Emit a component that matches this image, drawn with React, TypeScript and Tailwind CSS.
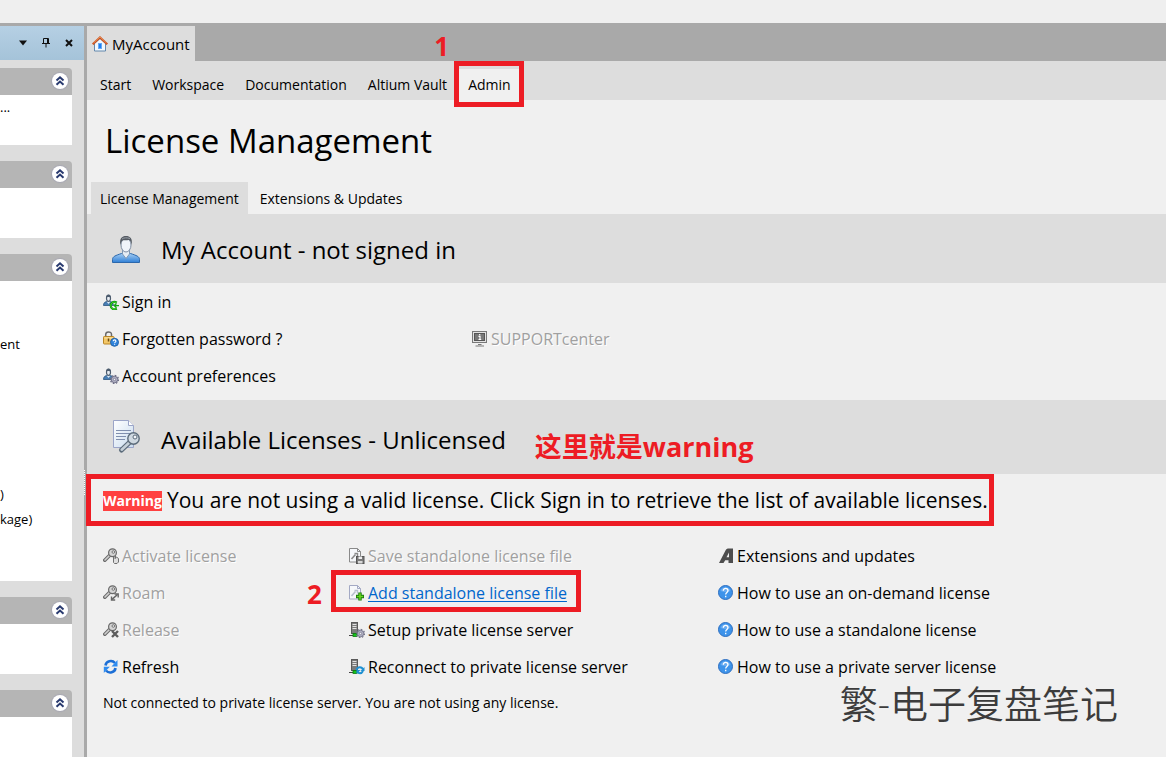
import { useState } from 'react'
import type { ReactNode } from 'react'

type IconName =
  | 'signin'
  | 'lock'
  | 'prefs'
  | 'support'
  | 'activate'
  | 'roam'
  | 'release'
  | 'refresh'
  | 'save'
  | 'add'
  | 'setup'
  | 'reconnect'
  | 'altium'
  | 'help'

interface LinkItem {
  label: string
  icon: IconName
  disabled?: boolean
  active?: boolean
}

const NAV = ['Start', 'Workspace', 'Documentation', 'Altium Vault', 'Admin']
const SUB_TABS = ['License Management', 'Extensions & Updates']

const ACCOUNT_COLUMNS: LinkItem[][] = [
  [
    { label: 'Sign in', icon: 'signin' },
    { label: 'Forgotten password ?', icon: 'lock' },
    { label: 'Account preferences', icon: 'prefs' },
  ],
  [{ label: 'SUPPORTcenter', icon: 'support', disabled: true }],
]

const LICENSE_COLUMNS: LinkItem[][] = [
  [
    { label: 'Activate license', icon: 'activate', disabled: true },
    { label: 'Roam', icon: 'roam', disabled: true },
    { label: 'Release', icon: 'release', disabled: true },
    { label: 'Refresh', icon: 'refresh' },
  ],
  [
    { label: 'Save standalone license file', icon: 'save', disabled: true },
    { label: 'Add standalone license file', icon: 'add', active: true },
    { label: 'Setup private license server', icon: 'setup' },
    { label: 'Reconnect to private license server', icon: 'reconnect' },
  ],
  [
    { label: 'Extensions and updates', icon: 'altium' },
    { label: 'How to use an on-demand license', icon: 'help' },
    { label: 'How to use a standalone license', icon: 'help' },
    { label: 'How to use a private server license', icon: 'help' },
  ],
]

function MiniUser() {
  return (
    <>
      <path d="M0.5 11.500c0-3 1.500-3.500 4-4.500h2c2.500 1 3.500 1.500 4 4.500z" fill="#4a7fb5" stroke="#2c5680" strokeWidth="0.8" />
      <path d="M3.500 7.500l2 2.500 2-2.500" fill="#dce9f5" />
      <ellipse cx="5.500" cy="4.200" rx="2" ry="3.200" fill="#e8edf3" stroke="#4d5c6e" strokeWidth="1.200" />
      <path d="M3 4c0-4.500 5-4.500 5 0-1-1.500-4-1.500-5 0z" fill="#4d5c6e" />
    </>
  )
}

function MiniGear({ color = '#6e6e86' }: { color?: string }) {
  return (
    <>
      <circle cx="11.500" cy="11.500" r="4" fill="none" stroke={color} strokeWidth="1.400" strokeDasharray="1.600 1.500" />
      <circle cx="11.500" cy="11.500" r="3.200" fill="#b4b4c8" stroke={color} />
      <circle cx="11.500" cy="11.500" r="1.200" fill="#eeeef4" stroke={color} strokeWidth="0.8" />
    </>
  )
}

function MiniKey() {
  return (
    <>
      <path d="M7.500 6.500L1.800 12.200" stroke="#6a6a6a" strokeWidth="3.600" strokeLinecap="round" />
      <path d="M7.500 6.500L2 12" stroke="#d0d0d0" strokeWidth="1.600" strokeLinecap="round" />
      <circle cx="9.500" cy="4.700" r="3.900" fill="#d4d4d4" stroke="#6a6a6a" strokeWidth="1.200" />
      <circle cx="10.300" cy="4" r="1.300" fill="#f0f0f0" stroke="#6a6a6a" strokeWidth="0.9" />
    </>
  )
}

function MiniPage({ stroke, mark }: { stroke: string; mark: string }) {
  return (
    <>
      <path d="M0.500 0.500h8l3 3v10.500h-11z" fill="#f6f8fb" stroke={stroke} />
      <path d="M8.500 0.500v3h3" fill="none" stroke={stroke} />
      <path d="M2.500 11l4-4.500" stroke={mark} strokeWidth="1.600" />
      <path d="M5.500 5.500h3v3" fill="none" stroke={mark} strokeWidth="1.400" />
    </>
  )
}

function MiniServer() {
  return (
    <>
      <rect x="2.500" y="0.500" width="6" height="11" fill="#7c7c7c" stroke="#5a5a5a" />
      <path d="M3.500 2.500h4M3.500 4.500h4M3.500 6.500h4" stroke="#e2e2e2" />
      <path d="M0 13.500h9" stroke="#444" />
      <rect x="4" y="11.500" width="4" height="3" fill="#17c21c" stroke="#0b7a10" strokeWidth="0.8" />
    </>
  )
}

const ICONS: Record<IconName, ReactNode> = {
  signin: (
    <>
      <MiniUser />
      <path d="M13.800 8.700c-3-2-6.100 0-6.100 2.900s3.100 4.900 6.100 2.900" fill="none" stroke="#0a9a0a" strokeWidth="2.200" />
      <path d="M13.500 8.700c-3-1.500-5.600 0-5.600 2.900s2.600 4.400 5.600 2.900" fill="none" stroke="#5be03c" strokeWidth="0.8" />
      <path d="M16 11.600h-4.500M13.500 9.500l-2.300 2.100 2.300 2.100" fill="none" stroke="#12a512" strokeWidth="1.300" />
    </>
  ),
  lock: (
    <>
      <path d="M2.700 6V3.500c0-3.500 5.800-3.500 5.800 0V6" fill="none" stroke="#6b6b6b" strokeWidth="1.500" />
      <rect x="0.500" y="5.500" width="10.500" height="7.500" rx="0.800" fill="#f3c768" stroke="#b98524" />
      <path d="M1.500 7h8.500" stroke="#fbe6ae" />
      <path d="M5.500 7.500v3" stroke="#6b4b12" strokeWidth="1.500" />
      <circle cx="11.500" cy="11.300" r="4" fill="#2f83dc" stroke="#2463a8" />
      <path d="M10.200 10.200c0-1.800 2.700-1.800 2.700 0 0 0.900-1.300 0.900-1.300 2M11.600 13.200v0.900" fill="none" stroke="#fff" strokeWidth="1.100" />
    </>
  ),
  prefs: (
    <>
      <MiniUser />
      <MiniGear />
    </>
  ),
  support: (
    <>
      <rect x="0.500" y="0.500" width="14" height="11" fill="#e2e2e2" stroke="#787878" />
      <rect x="2.500" y="2.500" width="10" height="7" fill="#787878" stroke="#555" />
      <path d="M7.700 3v1.300M6.500 5.300h1.500v3M6.500 8.500h2.700" fill="none" stroke="#fff" strokeWidth="1.200" />
      <path d="M6 13.500h3.500M3.500 15h8.500" stroke="#787878" />
    </>
  ),
  activate: (
    <>
      <MiniKey />
      <path d="M10.500 9l1.500 1.500 1.500-1.500 2 1.500v3.500l-1.500 1.500h-2.500l-1-1z" fill="#dedede" stroke="#707070" />
      <path d="M12.500 7.500v3" stroke="#707070" />
    </>
  ),
  roam: (
    <>
      <MiniKey />
      <path d="M9 14.300l5.500-4.800" stroke="#666" strokeWidth="1.600" />
      <path d="M11.500 9h3.700v3.500M8.500 11.500v3.500h3.700" fill="none" stroke="#666" strokeWidth="1.400" />
    </>
  ),
  release: (
    <>
      <MiniKey />
      <path d="M9 9l6 6M15 9l-6 6" stroke="#5c5c5c" strokeWidth="2.400" />
    </>
  ),
  refresh: (
    <>
      <path d="M2.500 6.500C3 2 9 0.500 12 4" fill="none" stroke="#1c6fd6" strokeWidth="2.600" />
      <path d="M14.500 1v6.500H8.500z" fill="#2f8cf0" />
      <path d="M12.500 9c-0.500 4.500-6.500 6-9.500 2.500" fill="none" stroke="#1c6fd6" strokeWidth="2.600" />
      <path d="M0.800 14V7.800h6z" fill="#2f8cf0" />
    </>
  ),
  save: (
    <>
      <MiniPage stroke="#8a8a8a" mark="#8a8a8a" />
      <rect x="7.500" y="8.500" width="7.500" height="7" fill="#7a7a7a" stroke="#555" />
      <rect x="9.500" y="8.500" width="3.500" height="2.500" fill="#eee" />
      <rect x="9" y="13" width="4.500" height="2.500" fill="#d8d8d8" />
    </>
  ),
  add: (
    <>
      <MiniPage stroke="#a3a9c4" mark="#b7bfd0" />
      <path d="M11 7.500v8M7 11.500h8" stroke="#16790a" strokeWidth="3.400" />
      <path d="M11 8.300v6.400M7.800 11.500h6.400" stroke="#66d421" strokeWidth="1.600" />
    </>
  ),
  setup: (
    <>
      <MiniServer />
      <MiniGear color="#77778c" />
    </>
  ),
  reconnect: (
    <>
      <MiniServer />
      <path d="M7.500 11c1-3.800 5.500-3.500 6.500-0.500M14 12c-1.500 3-4.500 2.800-5.500 0.300" fill="none" stroke="#1e90d2" strokeWidth="2" />
      <path d="M15.500 8v4h-4z" fill="#1e90d2" />
      <path d="M7.500 15V11h4z" fill="#1e90d2" />
    </>
  ),
  altium: (
    <>
      <path d="M1 15L7.500 2.500C8.300 1 9 0.500 11 0.500h4V15h-4.500v-2.800H7.200L5.500 15z" fill="#4d4d4d" />
      <path d="M8.500 9.300L11 4.500v4.800z" fill="#f0f0f0" />
    </>
  ),
  help: (
    <>
      <circle cx="7.500" cy="7.500" r="7" fill="#3d93ea" stroke="#2e6fc0" />
      <path d="M2.500 6c1-5 9-5 10 0-3 1.500-7 1.500-10 0z" fill="#68abf0" />
      <path d="M5.300 5.800c0-3.300 4.700-3.300 4.700 0 0 1.700-2.300 1.700-2.300 3.600M7.700 10.800v1.400" fill="none" stroke="#fff" strokeWidth="1.300" />
    </>
  ),
}

function Icon({ name }: { name: IconName }) {
  return (
    <svg className="w-4 h-4 shrink-0" viewBox="0 0 16 16" fill="none" aria-hidden="true">
      {ICONS[name]}
    </svg>
  )
}

function HomeIcon() {
  return (
    <svg className="w-4 h-4 shrink-0" viewBox="0 0 16 16" aria-hidden="true">
      <path d="M2.500 7.500L8 2.500l5.500 5v7.500h-11z" fill="#f2f7fc" stroke="#6388ad" />
      <path d="M0.700 8.300L8 1.500l7.300 6.800" fill="none" stroke="#c8501e" strokeWidth="2.200" />
      <path d="M1.500 7L8 1l6.500 6" fill="none" stroke="#f09a62" strokeWidth="0.800" />
      <rect x="6.500" y="7.500" width="3" height="5" fill="#1d7df2" stroke="#67a9f5" />
    </svg>
  )
}

function UserIcon() {
  return (
    <svg className="w-[30px] h-[30px] shrink-0" viewBox="0 0 30 30" aria-hidden="true">
      <defs>
        <linearGradient id="shirt" x1="0" y1="0" x2="0" y2="1">
          <stop offset="0" stopColor="#a4cdf3" />
          <stop offset="1" stopColor="#2f7fd6" />
        </linearGradient>
      </defs>
      <path d="M1.500 28.500v-3c0-3 3-4 9-6h9c6 2 9 3 9 6v3z" fill="url(#shirt)" stroke="#2c68ac" />
      <path d="M11.500 16v4l3.500 4.500 3.500-4.500v-4z" fill="#e6edf5" stroke="#7f97b3" />
      <ellipse cx="15" cy="11" rx="5" ry="7" fill="#f0f4fa" stroke="#7f8ea3" />
      <path d="M9.500 11C8 4.500 11 2 15 2s7 2.500 5.500 9c-0.500-3-1-4.500-2.500-5-3 0.500-5 0-6.500 0.500-1 0.500-1.500 2.500-2 4.500z" fill="#555b63" />
      <path d="M11 5c2-1.500 5-1.500 8-0.500" fill="none" stroke="#9aa1a9" />
    </svg>
  )
}

function LicenseIcon() {
  return (
    <svg className="w-[30px] h-[34px] shrink-0" viewBox="0 0 30 34" aria-hidden="true">
      <defs>
        <linearGradient id="sheet" x1="0" y1="0" x2="1" y2="1">
          <stop offset="0" stopColor="#ffffff" />
          <stop offset="1" stopColor="#c9dcef" />
        </linearGradient>
      </defs>
      <path d="M2.500 0.500h15l5 5v22h-20z" fill="url(#sheet)" stroke="#9ba5c8" />
      <path d="M17.500 0.500v5h5" fill="#fff" stroke="#9ba5c8" />
      <path d="M5 10.500h15M5 13.500h14M5 16.500h10M5 19.500h9" stroke="#7f8fae" />
      <path d="M20 21l-9.500 9" stroke="#5b6b7a" strokeWidth="5" strokeLinecap="round" />
      <path d="M20 21l-9.300 8.700" stroke="#c5d0d9" strokeWidth="2.600" strokeLinecap="round" />
      <circle cx="22.500" cy="18.500" r="5.700" fill="#cfd9e1" stroke="#5b6b7a" strokeWidth="1.400" />
      <circle cx="24" cy="17" r="2" fill="#f4f7fa" stroke="#5b6b7a" />
    </svg>
  )
}

/* Red frame drawn round the parent control */
function Mark({ className }: { className: string }) {
  return <span className={`absolute border-[5px] border-[#ed1c24] pointer-events-none ${className}`} />
}

function ActionLink({ item }: { item: LinkItem }) {
  const base = 'relative flex items-center h-[37px] gap-[3px] text-[16px] whitespace-nowrap text-left'

  if (item.disabled) {
    return (
      <button disabled className={`${base} text-[#a0a0a0] [text-shadow:1px_1px_0_#fff]`}>
        <Icon name={item.icon} />
        {item.label}
      </button>
    )
  }

  return (
    <a href="#" className={`${base} ${item.active ? 'text-[#0066cc]' : 'text-black'}`}>
      <Icon name={item.icon} />
      <span className={item.active ? 'underline underline-offset-2' : ''}>{item.label}</span>
      {item.active && (
        <>
          <Mark className="-left-[18px] -right-[14px] -top-1 h-[42px]" />
          <span className="absolute -left-[42px] top-px text-[26px] font-bold text-[#ed1c24]">2</span>
        </>
      )}
    </a>
  )
}

function LinkColumn({ items }: { items: LinkItem[] }) {
  return (
    <div className="flex flex-col items-start">
      {items.map((item) => (
        <ActionLink key={item.label} item={item} />
      ))}
    </div>
  )
}

function PanelGroup({ className, children }: { className: string; children?: ReactNode }) {
  return (
    <section className={`flex flex-col ${className}`}>
      <div className="flex items-center justify-end h-[27px] pr-1 pb-px rounded-tr bg-[#b5b5b5]">
        <button aria-label="Collapse" className="w-4 h-4 rounded-full bg-white shadow-[0_0_1px_1px_#a8a8b4]">
          <svg viewBox="0 0 16 16" className="w-4 h-4" fill="none" stroke="#28396f" strokeWidth="2">
            <path d="M4.500 7.500L8 4.300l3.500 3.200M4.500 11.800L8 8.600l3.500 3.200" />
          </svg>
        </button>
      </div>
      <div className="flex-1 bg-white text-[13px] leading-[25px]">{children}</div>
    </section>
  )
}

function SidePanel() {
  return (
    <aside className="flex flex-col w-[84px] shrink-0 bg-[#dddddd]">
      <div className="flex items-center justify-end h-[34px] gap-[9px] pr-2 bg-linear-to-b from-[#b6d0e4] to-[#a5c3d9]">
        <button aria-label="Panel menu">
          <svg className="w-[14px] h-[14px]" viewBox="0 0 14 14">
            <path d="M3 4.500h8L7 9.500z" fill="#111" />
          </svg>
        </button>
        <button aria-label="Pin">
          <svg className="w-[14px] h-[14px]" viewBox="0 0 14 14" fill="none" stroke="#111">
            <path d="M4.500 2.500h5v5h-5zM8.500 2.500v5M3 7.500h8M7 7.500v4" />
          </svg>
        </button>
        <button aria-label="Close">
          <svg className="w-[14px] h-[14px]" viewBox="0 0 14 14" stroke="#111" strokeWidth="2">
            <path d="M4 4l6 6M10 4l-6 6" />
          </svg>
        </button>
      </div>
      <div className="flex flex-col flex-1 gap-4 pt-2 pr-3">
        <PanelGroup className="h-[77px]">...</PanelGroup>
        <PanelGroup className="h-[77px]" />
        <PanelGroup className="h-[327px]">
          <p className="pt-[51px]">ent</p>
          <p className="pt-[125px]">)</p>
          <p>kage)</p>
        </PanelGroup>
        <PanelGroup className="h-[77px]" />
        <PanelGroup className="flex-1" />
      </div>
    </aside>
  )
}

export default function App() {
  const [page, setPage] = useState('Admin')
  const [subTab, setSubTab] = useState('License Management')

  return (
    <div className="flex flex-col min-h-screen bg-[#f0f0f0] text-black font-['Open_Sans','Noto_Sans_CJK_SC',sans-serif]">
      <div className="h-[23px] bg-[#efefef]" />
      <div className="flex flex-1 border-t-[3px] border-[#a9a9a9]">
        <SidePanel />
        <div className="flex items-center w-[3px] shrink-0 bg-[#a9a9a9]">
          <div className="w-px h-[25px] mt-[182px] border-l border-dotted border-white" />
        </div>

        <main className="flex-1 min-w-0">
          {/* Document tabs */}
          <div className="flex h-[35px] bg-[#a9a9a9]">
            <button className="flex items-center gap-1 px-[5px] pt-px bg-[#dddddd] text-[15px]">
              <HomeIcon />
              MyAccount
            </button>
          </div>

          {/* Page navigation */}
          <nav className="flex h-[39px] pt-2 pl-[3px] gap-px bg-[#dddddd] text-[14px]">
            {NAV.map((name) => (
              <button
                key={name}
                onClick={() => setPage(name)}
                className={`relative px-[10px] whitespace-nowrap ${page === name ? 'bg-[#f0f0f0]' : ''}`}
              >
                {name}
                {name === 'Admin' && (
                  <>
                    <Mark className="-left-1 -right-[3px] -top-2 h-[46px]" />
                    <span className="absolute -left-6 -top-[42px] text-[26px] font-bold text-[#ed1c24]">1</span>
                  </>
                )}
              </button>
            ))}
          </nav>

          <h1 className="flex items-center h-[82px] pl-[18px] text-[33px]">License Management</h1>

          <div className="flex h-8 pl-1 gap-[3px] text-[14px]">
            {SUB_TABS.map((name) => (
              <button
                key={name}
                onClick={() => setSubTab(name)}
                className={`px-[9px] whitespace-nowrap ${subTab === name ? 'bg-[#dddddd]' : ''}`}
              >
                {name}
              </button>
            ))}
          </div>

          {/* Account */}
          <header className="flex items-center h-[69px] pl-6 gap-5 bg-[#dddddd]">
            <UserIcon />
            <h2 className="text-[24px] pt-[2px]">My Account - not signed in</h2>
          </header>
          <div className="grid grid-cols-[369px_1fr] pl-4 pb-[6px]">
            {ACCOUNT_COLUMNS.map((items, i) => (
              <div key={i} className={i === 1 ? 'pt-[37px]' : ''}>
                <LinkColumn items={items} />
              </div>
            ))}
          </div>

          {/* Licenses */}
          <header className="flex items-center h-[74px] pl-6 gap-5 bg-[#dddddd]">
            <LicenseIcon />
            <h2 className="text-[24px] pt-[6px]">Available Licenses - Unlicensed</h2>
            <span className="pl-[9px] pt-[21px] text-[27px] font-bold text-[#ed1c24]">这里就是warning</span>
          </header>
          <div className="flex">
            <p className="relative flex items-center h-[52px] pl-4 pr-[6px] pt-[2px] gap-[5px] text-[21px] whitespace-nowrap">
              <strong className="bg-[#ff4040] text-white text-[14px] leading-[20px]">Warning</strong>
              You are not using a valid license. Click Sign in to retrieve the list of available licenses.
              <Mark className="-left-px right-0 inset-y-0" />
            </p>
          </div>
          <div className="grid grid-cols-[246px_369px_1fr] pt-[11px] pl-4">
            {LICENSE_COLUMNS.map((items, i) => (
              <LinkColumn key={i} items={items} />
            ))}
          </div>
          <div className="relative flex items-center h-[34px] pl-4">
            <p className="text-[14px]">Not connected to private license server. You are not using any license.</p>
            <span className="absolute right-12 -top-[10px] text-[38px] font-[350] text-[#3c3c3c] whitespace-nowrap">
              繁-电子复盘笔记
            </span>
          </div>
        </main>
      </div>
    </div>
  )
}
